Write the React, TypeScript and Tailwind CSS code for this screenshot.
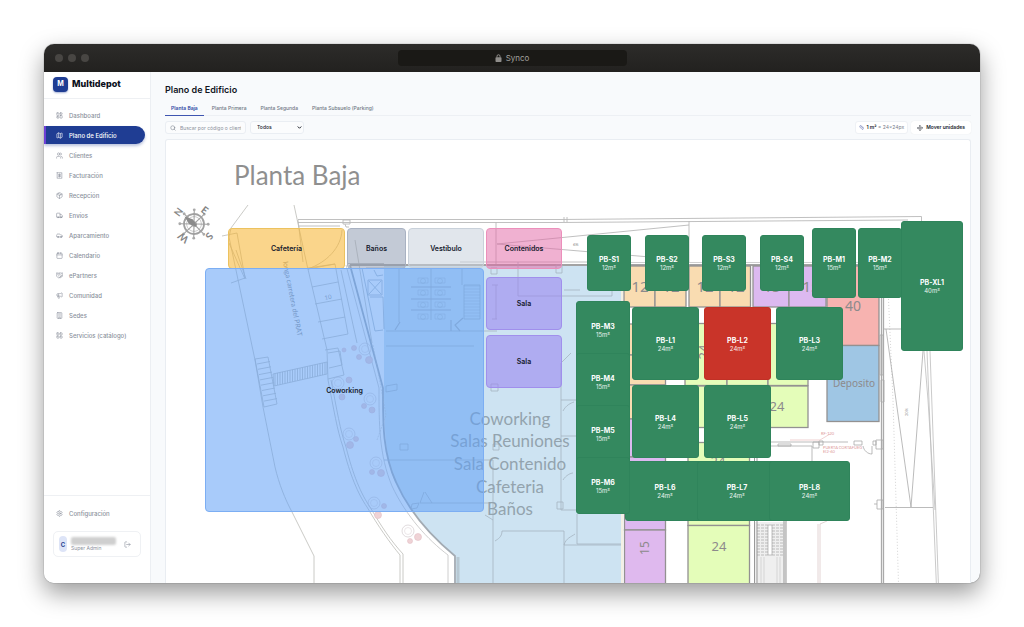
import React, { useState } from "react";
import {
  Building,
  Calendar,
  Car,
  Handshake,
  LayoutDashboard,
  LayoutGrid,
  LogOut,
  Map,
  Megaphone,
  Move,
  Package,
  Receipt,
  Ruler,
  Search,
  Settings,
  Truck,
  Users,
  type LucideIcon,
} from "lucide-react";

type NavItem = { label: string; icon: LucideIcon };

const NAV: NavItem[] = [
  { label: "Dashboard", icon: LayoutDashboard },
  { label: "Plano de Edificio", icon: Map },
  { label: "Clientes", icon: Users },
  { label: "Facturación", icon: Receipt },
  { label: "Recepción", icon: Package },
  { label: "Envíos", icon: Truck },
  { label: "Aparcamiento", icon: Car },
  { label: "Calendario", icon: Calendar },
  { label: "ePartners", icon: Handshake },
  { label: "Comunidad", icon: Megaphone },
  { label: "Sedes", icon: Building },
  { label: "Servicios (catálogo)", icon: LayoutGrid },
];

const FLOORS = ["Planta Baja", "Planta Primera", "Planta Segunda", "Planta Subsuelo (Parking)"];

/* Plan coordinates start at this point; every shape below uses the same system. */
const ORIGIN = { x: 166, y: 140 };

type Box = { x: number; y: number; w: number; h: number };
type Zone = Box & { name: string; tone: string };
type Unit = Box & { name: string; area: number; taken?: boolean };

const ZONES: Zone[] = [
  { name: "Cafetería", x: 228, y: 228, w: 117, h: 41, tone: "bg-[rgba(246,179,44,0.55)] border-[#ecc25f]" },
  { name: "Baños", x: 347, y: 228, w: 59, h: 41, tone: "bg-[rgba(145,158,180,0.55)] border-[#a9b2c2]" },
  { name: "Vestíbulo", x: 408, y: 228, w: 76, h: 40, tone: "bg-[rgba(200,210,220,0.55)] border-[#c9d1da]" },
  { name: "Contenidos", x: 486, y: 228, w: 76, h: 41, tone: "bg-[rgba(227,105,167,0.52)] border-[#ec8fbb]" },
  { name: "Coworking", x: 205, y: 268, w: 279, h: 244, tone: "bg-[rgba(96,160,246,0.55)] border-[#7caef3]" },
  { name: "Sala", x: 486, y: 277, w: 76, h: 53, tone: "bg-[rgba(153,133,240,0.58)] border-[#a08fec]" },
  { name: "Sala", x: 486, y: 335, w: 76, h: 53, tone: "bg-[rgba(153,133,240,0.58)] border-[#a08fec]" },
];

const UNITS: Unit[] = [
  { name: "PB-S1", area: 12, x: 587, y: 235, w: 44, h: 56 },
  { name: "PB-S2", area: 12, x: 645, y: 235, w: 44, h: 56 },
  { name: "PB-S3", area: 12, x: 702, y: 235, w: 44, h: 56 },
  { name: "PB-S4", area: 12, x: 760, y: 235, w: 44, h: 56 },
  { name: "PB-M1", area: 15, x: 812, y: 228, w: 44, h: 70 },
  { name: "PB-M2", area: 15, x: 858, y: 228, w: 44, h: 70 },
  { name: "PB-XL1", area: 40, x: 901, y: 221, w: 62, h: 130 },
  { name: "PB-M3", area: 15, x: 576, y: 301, w: 54, h: 58 },
  { name: "PB-M4", area: 15, x: 576, y: 353, w: 54, h: 58 },
  { name: "PB-M5", area: 15, x: 576, y: 405, w: 54, h: 58 },
  { name: "PB-L6", area: 24, x: 625, y: 461, w: 80, h: 60 },
  { name: "PB-M6", area: 15, x: 576, y: 457, w: 54, h: 57 },
  { name: "PB-L1", area: 24, x: 632, y: 307, w: 67, h: 73 },
  { name: "PB-L2", area: 24, x: 704, y: 307, w: 67, h: 73, taken: true },
  { name: "PB-L3", area: 24, x: 776, y: 307, w: 67, h: 73 },
  { name: "PB-L4", area: 24, x: 632, y: 385, w: 67, h: 73 },
  { name: "PB-L5", area: 24, x: 704, y: 385, w: 67, h: 73 },
  { name: "PB-L7", area: 24, x: 697, y: 461, w: 80, h: 60 },
  { name: "PB-L8", area: 24, x: 769, y: 461, w: 81, h: 60 },
];

const place = (b: Box): React.CSSProperties => ({
  left: b.x - ORIGIN.x,
  top: b.y - ORIGIN.y,
  width: b.w,
  height: b.h,
});

type Room = Box & { fill: string };
const ROOMS: Room[] = [
  { x: 624, y: 266, w: 31, h: 41, fill: "#f9dcb1" },
  { x: 655, y: 266, w: 31, h: 41, fill: "#f9dcb1" },
  { x: 689, y: 266, w: 31, h: 41, fill: "#f9dcb1" },
  { x: 720, y: 266, w: 30.5, h: 41, fill: "#f9dcb1" },
  { x: 753, y: 266, w: 36, h: 41, fill: "#dcb9f0" },
  { x: 789, y: 266, w: 37, h: 41, fill: "#dcb9f0" },
  { x: 827, y: 266, w: 52, h: 79.5, fill: "#f7b3b0" },
  { x: 827, y: 345.5, w: 52, h: 76, fill: "#9fc6e4" },
  { x: 624.5, y: 324, w: 41, h: 31, fill: "#f9dcb1" },
  { x: 624.5, y: 355, w: 41, h: 30, fill: "#f9dcb1" },
  { x: 624.5, y: 385, w: 41, h: 34, fill: "#f9dcb1" },
  { x: 624.5, y: 419, w: 41, h: 38, fill: "#dcb9f0" },
  { x: 624.5, y: 457, w: 41, h: 73, fill: "#dcb9f0" },
  { x: 624.5, y: 530, w: 41, h: 80, fill: "#dfb9ee" },
  { x: 685, y: 323.5, w: 42, h: 62, fill: "#e4fdb9" },
  { x: 727, y: 323.5, w: 41, h: 62, fill: "#e4fdb9" },
  { x: 768, y: 323.5, w: 40, h: 62, fill: "#e4fdb9" },
  { x: 685, y: 386, w: 42, h: 41.5, fill: "#e4fdb9" },
  { x: 727, y: 386, w: 41, h: 41.5, fill: "#e4fdb9" },
  { x: 768, y: 386, w: 40, h: 41.5, fill: "#e4fdb9" },
  { x: 688, y: 442.5, w: 61.5, h: 83, fill: "#e4fdb9" },
  { x: 688, y: 525.5, w: 61.5, h: 80, fill: "#e4fdb9" },
];

const ROOM_LABELS: { t: string; x: number; y: number; size: number; turn?: number }[] = [
  { t: "12", x: 640, y: 292, size: 15 },
  { t: "12", x: 671, y: 292, size: 15 },
  { t: "12", x: 705, y: 292, size: 15 },
  { t: "12", x: 736, y: 292, size: 15 },
  { t: "15", x: 772, y: 292, size: 15 },
  { t: "15", x: 811, y: 292, size: 15 },
  { t: "40", x: 853, y: 311, size: 14 },
  { t: "24", x: 777, y: 411, size: 13 },
  { t: "Deposito", x: 854, y: 387, size: 10 },
  { t: "24", x: 718, y: 466, size: 13 },
  { t: "24", x: 719, y: 551, size: 13 },
  { t: "24", x: 708, y: 352, size: 13, turn: -90 },
  { t: "15", x: 649, y: 548, size: 12, turn: -90 },
];

const TREES: [number, number, number][] = [
  [365, 349, 6], [369, 360, 3.5], [359, 357, 2.5], [354, 348, 2.5], [344, 350, 2],
  [338, 383, 6], [349, 380, 3], [342, 397, 3],
  [370, 399, 6], [372, 410, 3], [364, 406, 2.5],
  [349, 434, 6], [356, 439, 2.5], [350, 445, 3.5],
  [376, 463, 6], [381, 473, 3.5], [372, 472, 2.5],
  [374, 503, 6], [384, 506, 2.5], [378, 515, 3.5],
  [408, 531, 6], [418, 537, 3.5], [410, 541, 2.5],
];

const series = (n: number) => Array.from({ length: n }, (_, i) => i);

function Compass() {
  return (
    <g transform="translate(194 224) rotate(-52)" stroke="#a0a0a0" fill="none">
      <circle r="10" strokeWidth="1.8" />
      <circle r="7.4" strokeWidth="0.5" />
      <circle r="2.2" strokeWidth="1" />
      {series(8).map((i) => (
        <g key={i} transform={`rotate(${i * 45 + 8})`}>
          <path d="M0-2.2V-14" strokeWidth="1.1" />
          <circle cy="-14.2" r="1.4" fill="#aaa" stroke="none" />
        </g>
      ))}
      <path d="M0-12 3-4 1 3-1 3-3-4Z" fill="#8b8b8b" stroke="none" />
      <g fill="#858585" stroke="none" fontSize="10" fontWeight="700" textAnchor="middle">
        <text y="-16">N</text>
        <text y="-14" transform="rotate(90)">E</text>
        <text y="-16" transform="rotate(180)">S</text>
        <text y="-14" transform="rotate(270)">W</text>
      </g>
    </g>
  );
}

function FloorDrawing() {
  return (
    <svg
      className="absolute left-0 top-0 font-['Lato',sans-serif]"
      width="805"
      height="460"
      viewBox="166 140 805 460"
      fill="none"
      aria-hidden="true"
    >
      <text x="234" y="185" fontSize="26" fill="#8f8f8f">Planta Baja</text>
      <Compass />

      {/* Shared interior */}
      <path
        d="M384 266H621.500V600H456V556C430 538 404 502 395 482C386 460 384 430 384 390Z"
        fill="#cde3f2"
      />
      <path d="M350 265 383 388C383 420 382 452 396 482C409 512 432 537 455 556V600" stroke="#a3abb3" strokeWidth="1.8" />
      <path d="M346 265 379 388C379 424 379 455 392 486C406 516 428 540 448 555V600" stroke="#c2c2c2" strokeWidth="0.8" />
      <path d="M458 557V600" stroke="#b7c8d3" strokeWidth="3" />

      {/* Street */}
      <g stroke="#bcbcb8" strokeWidth="0.8">
        <path d="M248 205 231 228 229 237 255 360 263 407 275 467C279 484 285 499 292 512L314 556V600" />
        <path d="M294 205 307 265 327 350 328 380C334 410 337 430 343 447C350 475 358 494 367 507C378 526 390 543 400 555V600" />
        <path d="M331 380C337 410 340 430 346 447C353 475 361 494 370 507C381 526 391 541 403 554V600" />
        <path d="M222 236 237 233 245 278 231 283M236 250 246 279M229 243 245 279" />
        <path d="M298 220 303 262M342 230C341 248 327 262 308 269L335 264" />
        <path d="M308 268 335 264 348 334 322 339M312 287 338 282M315 304 342 299M318 322 345 317" />
        <path d="M341 270 357 343M355 240 372 343M325 350 338 348 344 375 328 379M328 353 340 351 342 365 329 368" />
        <path d="M255 359 268 357 277 404 264 407Z" />
        {series(8).map((i) => (
          <path key={i} d={`M${257 + i} ${364 + i * 5.3}l13-2.500`} />
        ))}
        <path d="M273 374 327 362V374L274 386Z" />
        {series(21).map((i) => (
          <path key={i} d={`M${275 + i * 2.5} ${373.5 - i * 0.55}v12`} />
        ))}
        <path d="M373 345 386 415 377 440" strokeDasharray="2 1" strokeWidth="0.5" />
      </g>
      <text x="283" y="262" fontSize="7" fill="#8b8b8b" transform="rotate(79 283 262)">
        longa carretera del PRAT
      </text>
      <text x="325" y="300" fontSize="6" fill="#999" transform="rotate(-12 325 300)">10</text>
      {TREES.map(([x, y, r]) => (
        <g key={`${x}-${y}`}>
          <circle
            cx={x}
            cy={y}
            r={r}
            fill={r > 5 ? "none" : "#efd3d6"}
            stroke={r > 5 ? "#cdc5c8" : "#e3c0c6"}
            strokeWidth="0.6"
          />
          {r > 5 && <circle cx={x} cy={y} r="3.5" stroke="#d8cfd2" strokeWidth="0.5" />}
        </g>
      ))}

      {/* Outer walls */}
      <g stroke="#b9b9b9" strokeWidth="0.9">
        <path d="M298 219.500H560L921.500 216.500V224M298 222.500H560L908 220M298 226H340" />
        <path d="M343 220h7v4h-7zM345 224l1 3h3M564 217v5M567 217v5M496 222v42M689 221v42" />
        <path d="M497 244 689 225M497 244 650 257" />
        <path d="M347 263.500H384M460 262H621" />
      </g>
      <text x="573" y="246" fontSize="4" fill="#888">6%</text>
      <path d="M350 265H884" stroke="#a3a3a3" strokeWidth="2.200" />
      <path d="M590 262.500H884" stroke="#c4c4c4" strokeWidth="0.8" />

      {/* Interior partitions */}
      <g stroke="#a5b4c0" strokeWidth="0.8">
        <path d="M362 268 375 331 383 330M366 268H384M368 280h14v15h-14zM370 297h13l1 32M374 270l3 6 6-1" />
        <path d="M369 281l12 13M381 281l-12 13" />
        <path d="M399 268V322M431 268V320M462 268V285M386 331H497M386 346H474" />
        <path d="M400 322 395 330M411 287H451M411 299H451M411 310H451M451 320v11M463 318 455 325 460 331" strokeWidth="1.2" />
        <path d="M464 285h16v34h-16zM496 285v34M492 285h6M492 319h5" />
        {series(11).map((i) => (
          <path key={i} d={`M464 ${286 + i * 3}h16`} strokeWidth="0.5" />
        ))}
        {series(4).map((i) => (
          <g key={i} strokeWidth="0.5">
            <circle cx="423" cy={281 + i * 12} r="2.500" />
            <circle cx="440" cy={281 + i * 12} r="2.500" />
            <path d={`M418 ${278 + i * 12}h10v5h-10zM435 ${278 + i * 12}h10v5h-10z`} />
          </g>
        ))}
        <path d="M491 268h6v6h-6zM556 265h6v8h-6zM491 384h7v7h-7zM493 444h6v6h-6zM557 502h6v7h-6z" />
        <path d="M386 386 397 384V390L386 392ZM400 444h8v6h-8zM412 504l7-1-2 5-6 1z" />
        <path d="M384 460H493V600M420 503H491M420 503 424 492M432 503 425 492M485 515 493 520" />
        <path d="M518 262V296H612V260M564 290H580M561 363V510H576M561 363 571 353M561 400H576M561 436H576" />
        <path d="M563 411C566 405 571 403 574 402M563 480C566 475 571 473 573 473M502 531H564V600M502 531C502 537 498 539 495 541" />
        <path d="M577 514V544H622M564 545H622M564 545C566 538 571 537 575 534" />
      </g>

      <g fontSize="17" fill="#93a3ae" textAnchor="middle">
        <text x="510" y="425">Coworking</text>
        <text x="510" y="447">Salas Reuniones</text>
        <text x="510" y="470">Sala Contenido</text>
        <text x="510" y="493">Cafeteria</text>
        <text x="510" y="515">Baños</text>
      </g>

      {/* Storage rooms */}
      <path d="M622 266V600" stroke="#f3f0e4" strokeWidth="2" />
      {ROOMS.map((r) => (
        <rect
          key={`${r.x}-${r.y}`}
          x={r.x}
          y={r.y}
          width={r.w}
          height={r.h}
          fill={r.fill}
          stroke="#939191"
          strokeWidth="1.300"
        />
      ))}
      <g className="font-['Noto_Sans',sans-serif]" fill="#8d8a8c" textAnchor="middle">
        {ROOM_LABELS.map((l) => (
          <text
            key={`${l.x}-${l.y}`}
            x={l.x}
            y={l.y}
            fontSize={l.size}
            transform={l.turn ? `rotate(${l.turn} ${l.x} ${l.y})` : undefined}
          >
            {l.t}
          </text>
        ))}
      </g>

      {/* Staircase */}
      <path d="M755 522H786V600H755Z" fill="#efefef" />
      <g stroke="#999" strokeWidth="0.6">
        <path d="M754.500 442V600M757 442V600M784 462V600M786 462V600" strokeWidth="1" />
        <path d="M768 525h4v30h-4z" fill="#fff" />
        {series(11).map((i) => (
          <path key={i} d={`M757 ${525 + i * 3}h11M772 ${525 + i * 3}h11`} strokeDasharray="3 1" />
        ))}
        <path d="M761 557V600M764 557V600M777 557V600M780 557V600" stroke="#c5c5c5" />
      </g>

      {/* Loading area */}
      <g stroke="#a9a9a9" strokeWidth="0.8">
        <path d="M771 442H848M771 446H812V461M778 444h13v2h-13z" />
        <path d="M813 442h6v6h-6zM819 441h4v4h-4zM854 441h8v4h-8zM873 441h3v4h-3zM876 440h7v9h-7z" />
        <path d="M863 446C864 451 868 454 872 454V446M877 500h6v9h-6zM874 504h3" />
        <path d="M818 524V600M820 524V600M820 524 827 521" stroke="#dcc9c9" />
        <path d="M881.500 266V600M883.500 266V600" stroke="#aaa" strokeWidth="1.300" />
        <path d="M880 335h3v40h-3zM881 380h3v22h-3z" />
        <path d="M884 329H901M886 329 911 507 923 351M885 507.500H933" />
        <path d="M927 351 937 600M924 351 928 400 935 510M930 351 939 600" stroke="#bdbdbd" />
        <path d="M887 266 893 400 899 600" strokeDasharray="1 2" strokeWidth="0.5" />
      </g>
      <path d="M790 440H820L830 434" stroke="#e6b3b3" strokeWidth="0.6" />
      <g fill="#dd9a9a" fontSize="4">
        <text x="821" y="435">RF-120</text>
        <text x="823" y="449">PUERTA CORTAFUEG</text>
        <text x="823" y="453">EI2-60</text>
      </g>
      <text x="908" y="416" fontSize="4" fill="#999" transform="rotate(-90 908 416)">20%</text>
    </svg>
  );
}

function Sidebar() {
  return (
    <aside className="flex w-[107px] shrink-0 flex-col border-r border-[#eceff3] bg-white">
      <div className="flex h-[27px] shrink-0 items-center gap-1 border-b border-[#eef0f3] pb-0.5 pl-[9px]">
        <span className="flex size-[15px] items-center justify-center rounded-[4px] bg-[#1f3d93] text-[7px] font-bold text-white shadow-[0_1px_2px_rgba(31,61,147,0.4)]">
          M
        </span>
        <span className="text-[9px] font-extrabold text-[#0b1020]">Multidepot</span>
      </div>

      <nav className="flex flex-1 flex-col gap-0.5 pr-[5px] pt-[7px]">
        {NAV.map(({ label, icon: Icon }) => {
          const active = label === "Plano de Edificio";
          return (
            <a
              key={label}
              href="#"
              aria-current={active ? "page" : undefined}
              className={
                active
                  ? "flex h-[18px] items-center gap-1.5 rounded-r-full border-l-2 border-[#6d3fd6] bg-[#1f3d93] pl-2.5 text-[6px] font-medium text-white shadow-[0_2px_3px_rgba(31,61,147,0.3)]"
                  : "flex h-[18px] items-center gap-1.5 pl-3 text-[6px] font-medium text-[#8b919c]"
              }
            >
              <Icon className="size-[7px]" strokeWidth={2} />
              {label}
            </a>
          );
        })}
      </nav>

      <div className="border-t border-[#eef0f3] px-[9px] pb-[26px] pt-2">
        <a href="#" className="flex h-[18px] items-center gap-1.5 pl-[3px] text-[6px] font-medium text-[#8b919c]">
          <Settings className="size-[7px]" strokeWidth={2} />
          Configuración
        </a>
        <div className="mt-[9px] flex h-[26px] items-center gap-1 rounded-[5px] border border-[#eff1f4] px-[5px]">
          <span className="flex h-4 w-2 items-center justify-center rounded-full bg-[#dde4f7] text-[6px] font-bold text-[#27408f]">
            C
          </span>
          <div className="flex min-w-0 flex-1 flex-col">
            <span className="h-2 rounded-[2px] bg-[#cfcfcf] blur-[1px]" />
            <span className="text-[5px] leading-[6px] text-[#8b919c]">Super Admin</span>
          </div>
          <button type="button" aria-label="Cerrar sesión" className="px-1 text-[#8b919c]">
            <LogOut className="size-[7px]" strokeWidth={2} />
          </button>
        </div>
      </div>
    </aside>
  );
}

function FloorPlan() {
  return (
    <div className="relative min-h-0 flex-1 overflow-hidden rounded-t-[3px] border border-b-0 border-[#e9edf2] bg-white">
      <FloorDrawing />
      {ZONES.map((z) => (
        <div
          key={`${z.x}-${z.y}`}
          style={place(z)}
          className={`absolute flex items-center justify-center rounded-[4px] border pt-0.5 text-[7px] font-semibold text-[#151a2d] ${z.tone}`}
        >
          {z.name}
        </div>
      ))}
      {UNITS.map((u) => (
        <button
          key={u.name}
          type="button"
          style={place(u)}
          className={`absolute flex flex-col items-center justify-center rounded-[3px] border pt-0.5 text-white ${
            u.taken ? "border-[#c03126] bg-[#c93429]" : "border-[#2f845b] bg-[#34895f]"
          }`}
        >
          <span className="text-[7px] font-bold leading-[8px]">{u.name}</span>
          <span className="text-[6px] leading-[8px] text-white/90">{u.area}m²</span>
        </button>
      ))}
    </div>
  );
}

export default function App() {
  const [floor, setFloor] = useState(FLOORS[0]);

  return (
    <div className="flex h-screen bg-white p-11 font-['Inter',sans-serif]">
      <div className="flex min-w-0 flex-1 flex-col overflow-hidden rounded-[10px] bg-[#f8fafc] shadow-[0_0_1px_rgba(0,0,0,0.7),0_10px_24px_rgba(0,0,0,0.4)]">
        <header className="grid h-7 shrink-0 grid-cols-[1fr_229px_1fr] items-center bg-linear-to-b from-[#2d2c2a] to-[#22211f]">
          <div className="flex gap-[5px] pl-[11px]">
            <span className="size-2 rounded-full bg-[#484643]" />
            <span className="size-2 rounded-full bg-[#484643]" />
            <span className="size-2 rounded-full bg-[#484643]" />
          </div>
          <div className="flex h-4 items-center justify-center gap-1 rounded-[4px] bg-[#1a1916] text-[8px] text-[#a3a19e]">
            <svg className="h-2 w-[7px]" viewBox="0 0 14 16" aria-hidden="true">
              <path d="M4 7V4.500a3 3 0 0 1 6 0V7" fill="none" stroke="#8f8d8a" strokeWidth="2" />
              <rect x="1" y="6.500" width="12" height="9.500" rx="1.500" fill="#8f8d8a" />
            </svg>
            Synco
          </div>
        </header>

        <div className="flex min-h-0 flex-1">
          <Sidebar />

          <main className="flex min-w-0 flex-1 flex-col pl-3.5 pr-[9px] pt-3">
            <h1 className="text-[9px] font-semibold leading-[12px] text-[#12161f]">Plano de Edificio</h1>

            <div role="tablist" className="mt-1.5 flex gap-0.5 border-b border-[#edf0f4]">
              {FLOORS.map((f) => (
                <button
                  key={f}
                  type="button"
                  role="tab"
                  aria-selected={f === floor}
                  onClick={() => setFloor(f)}
                  className={
                    f === floor
                      ? "-mb-px h-[14px] border-b border-[#3f55b0] px-1.5 text-[5px] font-semibold text-[#3048a4]"
                      : "-mb-px h-[14px] border-b border-transparent px-1.5 text-[5px] font-medium text-[#6f7683]"
                  }
                >
                  {f}
                </button>
              ))}
            </div>

            <div className="my-[5px] flex h-[13px] items-center">
              <label className="flex h-full w-[81px] items-center gap-1 rounded-[3px] border border-[#eaeef3] bg-[#fbfcfd] px-1 text-[#6f7683]">
                <Search className="size-1.5 shrink-0" strokeWidth={2} />
                <input
                  type="text"
                  aria-label="Buscar"
                  placeholder="Buscar por código o cliente"
                  className="h-full w-full min-w-0 bg-transparent text-[5px] outline-none placeholder:text-[#8b919c]"
                />
              </label>
              <div className="relative ml-1 h-full w-[54px]">
                <select
                  aria-label="Estado"
                  className="block h-full w-full appearance-none rounded-[3px] border border-[#eaeef3] bg-[#fbfcfd] py-0 pl-1.5 text-[5px] font-medium leading-[11px] text-[#20242e]"
                >
                  <option>Todos</option>
                </select>
                <svg
                  className="pointer-events-none absolute right-0.5 top-1 size-[5px]"
                  viewBox="0 0 10 10"
                  fill="none"
                  aria-hidden="true"
                >
                  <path d="M1.500 3 5 6.500 8.500 3" stroke="#20242e" strokeWidth="2" />
                </svg>
              </div>
              <div className="ml-auto flex h-full items-center gap-[3px]">
                <span className="flex h-full items-center gap-0.5 rounded-[3px] border border-[#eef1f5] bg-white px-[3px] text-[5px] text-[#777e8b]">
                  <Ruler className="size-[5px] text-[#3b4b9b]" strokeWidth={2} />
                  <span>
                    <b className="font-semibold text-[#20242e]">1 m²</b> = 24×24px
                  </span>
                </span>
                <button
                  type="button"
                  className="flex h-full items-center gap-[3px] rounded-[3px] bg-white px-1.5 text-[5px] font-semibold text-[#20242e] shadow-[0_0_1px_rgba(0,0,0,0.12)]"
                >
                  <Move className="size-1.5" strokeWidth={2} />
                  Mover unidades
                </button>
              </div>
            </div>

            <FloorPlan />
          </main>
        </div>
      </div>
    </div>
  );
}
